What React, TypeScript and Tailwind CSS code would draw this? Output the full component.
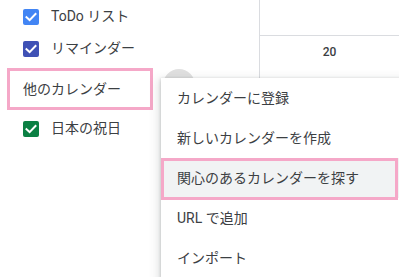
import React from "react";

const font = { fontFamily: 'Roboto, "Noto Sans CJK JP", sans-serif' };

function Check({ color }: { color: string }) {
  return (
    <span
      className="mt-[1px] flex h-4 w-4 items-center justify-center rounded-[2px]"
      style={{ backgroundColor: color }}
    >
      <svg width="14" height="14" viewBox="0 0 14 14" fill="none">
        <path d="M2.5 7.2 L5.6 10.1 L11.5 4" stroke="#fff" strokeWidth="2" strokeLinecap="square" />
      </svg>
    </span>
  );
}

function Row({ color, label }: { color: string; label: string }) {
  return (
    <div className="flex h-8 items-center gap-3 pl-[23px]">
      <Check color={color} />
      <span className="text-[14px] text-[#3c4043]">{label}</span>
    </div>
  );
}

const items = [
  "カレンダーに登録",
  "新しいカレンダーを作成",
  "関心のあるカレンダーを探す",
  "URL で追加",
  "インポート",
];

export default function App() {
  return (
    <div className="relative h-[277px] w-[399px] overflow-hidden bg-white" style={font}>
      <div className="flex h-full">
        <div className="flex w-[259px] flex-col">
          <Row color="#4285f4" label="ToDo リスト" />
          <Row color="#3f51b5" label="リマインダー" />
          <div className="mt-1 ml-[7px] flex h-[42px] w-[146px] items-center border-[3px] border-[#f5a8c8] pl-[13px] text-[14px] text-[#3c4043]">
            他のカレンダー
          </div>
          <div className="mt-[2px]">
            <Row color="#0b8043" label="日本の祝日" />
          </div>
        </div>
        <div className="flex flex-1 flex-col border-l border-[#dadce0]">
          <div className="h-[36px] border-b border-[#dadce0]" />
          <div className="flex justify-center pt-[8px] text-[12px] leading-4 font-medium text-[#3c4043]">
            20
          </div>
        </div>
      </div>

      <div className="absolute left-[163px] top-[69px] h-8 w-8 rounded-full bg-[#e0e0e0]" />

      <div className="absolute left-[161px] top-[78px] w-[260px] bg-white shadow-[0_4px_9px_3px_rgba(60,64,67,0.15),0_1px_3px_rgba(60,64,67,0.3)]">
        {items.map((t, i) => (
          <div
            key={t}
            className={
              "relative flex h-10 items-center pl-4 text-[14px] text-[#3c4043] " +
              (i === 2 ? "bg-[#f1f3f4]" : "")
            }
          >
            {t}
            {i === 2 && (
              <span className="absolute left-0 top-0 h-[42px] w-[237px] border-[3px] border-[#f5a8c8]" />
            )}
          </div>
        ))}
      </div>
    </div>
  );
}
